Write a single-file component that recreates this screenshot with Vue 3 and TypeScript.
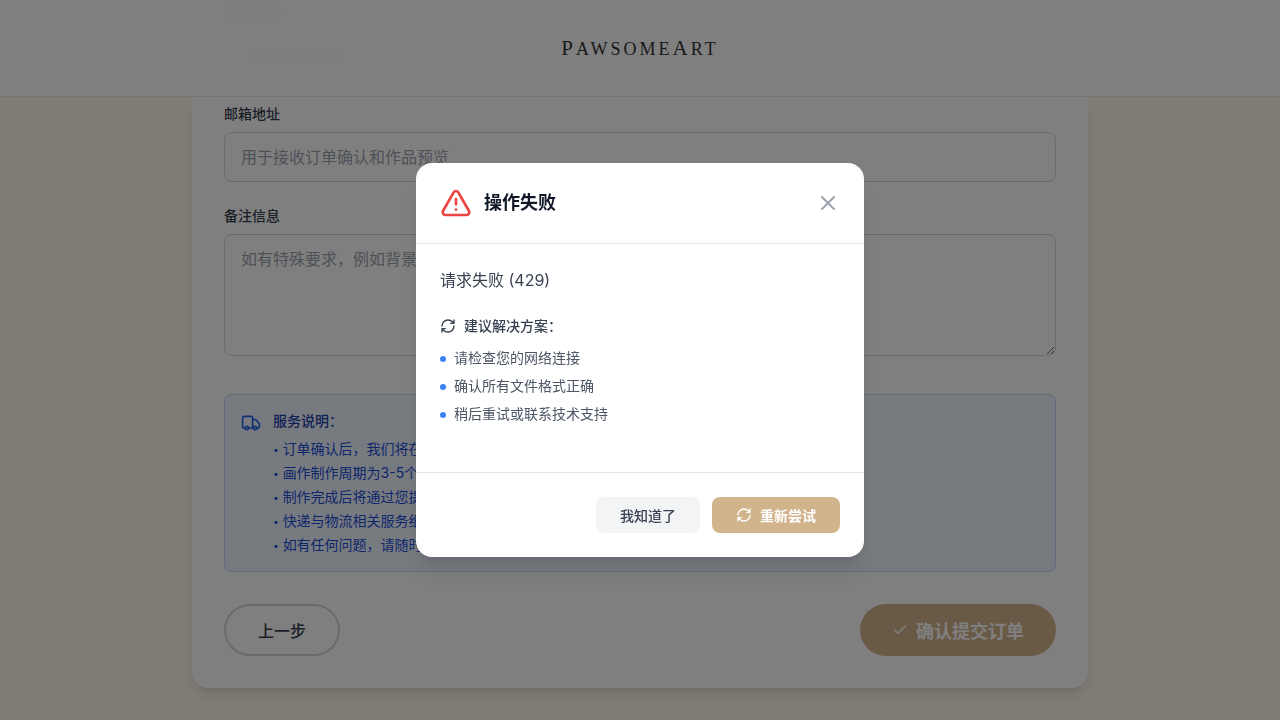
<script setup lang="ts">
import { ref } from 'vue'

const email = ref('')
const remark = ref('')
const open = ref(true)

const notes: string[] = [
  '订单确认后，我们将在24小时内与您联系',
  '画作制作周期为3-5个工作日',
  '制作完成后将通过您提供的邮箱发送预览',
  '快递与物流相关服务细节将另行通知',
  '如有任何问题，请随时联系客服',
]

const suggestions: string[] = ['请检查您的网络连接', '确认所有文件格式正确', '稍后重试或联系技术支持']
</script>

<template>
  <div class="page">
    <header class="topbar">
      <span class="haze haze-label"></span>
      <span class="haze haze-field"></span>
      <a class="brand" href="#"><span class="initial">P</span>awsome<span class="initial">A</span>rt</a>
    </header>

    <main class="card">
      <div class="field">
        <label for="email">邮箱地址</label>
        <input id="email" v-model="email" type="email" placeholder="用于接收订单确认和作品预览" />
      </div>
      <div class="field">
        <label for="remark">备注信息</label>
        <textarea id="remark" v-model="remark" placeholder="如有特殊要求，例如背景颜色、风格等，请在此说明"></textarea>
      </div>

      <section class="notice">
        <svg class="truck" viewBox="0 0 24 24" fill="none" stroke="currentColor" stroke-width="2" stroke-linecap="round" stroke-linejoin="round" aria-hidden="true">
          <path d="M14 18V6a2 2 0 0 0-2-2H4a2 2 0 0 0-2 2v11a1 1 0 0 0 1 1h2" />
          <path d="M15 18H9" />
          <path d="M19 18h2a1 1 0 0 0 1-1v-3.650a1 1 0 0 0-.22-.624l-3.480-4.350A1 1 0 0 0 17.520 8H14" />
          <circle cx="17" cy="18" r="2" />
          <circle cx="7" cy="18" r="2" />
        </svg>
        <div>
          <h3>服务说明：</h3>
          <ul>
            <li v-for="note in notes" :key="note"><span class="bullet">•</span><span>{{ note }}</span></li>
          </ul>
        </div>
      </section>

      <div class="actions">
        <button class="back" type="button">上一步</button>
        <button class="submit" type="button">
          <svg viewBox="0 0 24 24" fill="none" stroke="currentColor" stroke-width="2" stroke-linecap="round" stroke-linejoin="round" aria-hidden="true">
            <path d="M20 6 9 17l-5-5" />
          </svg>
          确认提交订单
        </button>
      </div>
    </main>

    <div v-if="open" class="overlay">
      <div class="dialog" role="dialog" aria-modal="true" aria-labelledby="dialog-title">
        <div class="dialog-head">
          <svg class="alert" viewBox="0 0 24 24" fill="none" stroke="currentColor" stroke-width="2" stroke-linecap="round" stroke-linejoin="round" aria-hidden="true">
            <path d="m21.730 18-8-14a2 2 0 0 0-3.480 0l-8 14A2 2 0 0 0 4 21h16a2 2 0 0 0 1.730-3" />
            <path d="M12 9v4M12 17h.01" />
          </svg>
          <h2 id="dialog-title">操作失败</h2>
          <button class="close" type="button" aria-label="关闭" @click="open = false">
            <svg viewBox="0 0 24 24" fill="none" stroke="currentColor" stroke-width="2" stroke-linecap="round" aria-hidden="true">
              <path d="M18 6 6 18M6 6l12 12" />
            </svg>
          </button>
        </div>
        <div class="dialog-body">
          <p>请求失败 (429)</p>
          <h4>
            <svg viewBox="0 0 24 24" fill="none" stroke="currentColor" stroke-width="2" stroke-linecap="round" stroke-linejoin="round" aria-hidden="true">
              <path d="M3 12a9 9 0 0 1 9-9 9.750 9.750 0 0 1 6.740 2.740L21 8M21 3v5h-5" />
              <path d="M21 12a9 9 0 0 1-9 9 9.750 9.750 0 0 1-6.740-2.740L3 16M8 16H3v5" />
            </svg>
            建议解决方案：
          </h4>
          <ul>
            <li v-for="item in suggestions" :key="item">{{ item }}</li>
          </ul>
        </div>
        <div class="dialog-foot">
          <button class="dismiss" type="button" @click="open = false">我知道了</button>
          <button class="retry" type="button">
            <svg viewBox="0 0 24 24" fill="none" stroke="currentColor" stroke-width="2" stroke-linecap="round" stroke-linejoin="round" aria-hidden="true">
              <path d="M3 12a9 9 0 0 1 9-9 9.750 9.750 0 0 1 6.740 2.740L21 8M21 3v5h-5" />
              <path d="M21 12a9 9 0 0 1-9 9 9.750 9.750 0 0 1-6.740-2.740L3 16M8 16H3v5" />
            </svg>
            重新尝试
          </button>
        </div>
      </div>
    </div>
  </div>
</template>

<style>
body {
  margin: 0;
  background: #fff9eb;
}
</style>

<style scoped>
* {
  box-sizing: border-box;
}
.page {
  min-height: 100vh;
  font-family: Inter, "Noto Sans CJK SC", sans-serif;
  color: #374151;
  background: #fff9eb;
}
h2, h3, h4, p, ul {
  margin: 0;
  padding: 0;
}
ul {
  list-style: none;
}
button, input, textarea {
  font-family: inherit;
}
button {
  border: 0;
  cursor: pointer;
}
svg {
  display: block;
  flex: none;
}
.topbar {
  position: relative;
  display: flex;
  align-items: center;
  justify-content: center;
  height: 97px;
  background: #fff;
  border-bottom: 1px solid #e5e7eb;
}
.haze {
  position: absolute;
  background: #fafafb;
  filter: blur(4px);
}
.haze-label {
  left: 226px;
  top: 6px;
  width: 54px;
  height: 10px;
}
.haze-field {
  left: 248px;
  top: 50px;
  width: 92px;
  height: 10px;
}
.brand {
  font-family: "Liberation Serif", serif;
  font-size: 18px;
  line-height: 28px;
  letter-spacing: 3px;
  text-transform: uppercase;
  text-decoration: none;
  color: #333;
}
.initial {
  font-size: 21px;
}
.card {
  max-width: 896px;
  margin: 0 auto;
  padding: 7px 32px 32px;
  background: #fff;
  border-radius: 0 0 16px 16px;
  box-shadow: 0 10px 15px -3px rgba(0, 0, 0, 0.1), 0 4px 6px -4px rgba(0, 0, 0, 0.1);
}
.field label {
  display: block;
  margin-bottom: 8px;
  font-size: 14px;
  line-height: 20px;
  font-weight: 500;
}
.field input, .field textarea {
  display: block;
  width: 100%;
  padding: 12px 16px;
  border: 1px solid #d1d5db;
  border-radius: 8px;
  background: #fff;
  font-size: 16px;
  line-height: 24px;
}
.field input {
  height: 50px;
  margin-bottom: 24px;
}
.field textarea {
  height: 122px;
  resize: vertical;
}
.field ::placeholder {
  color: #9ca3af;
}
.notice {
  display: flex;
  gap: 12px;
  margin-top: 38px;
  padding: 16px 16px 14px;
  border: 1px solid #bfdbfe;
  border-radius: 8px;
  background: #eff6ff;
  font-size: 14px;
  color: #1d4ed8;
}
.notice h3 {
  margin-bottom: 6px;
  font-size: 14px;
  line-height: 20px;
  font-weight: 500;
  color: #1e40af;
}
.notice li {
  display: flex;
  align-items: center;
  gap: 4px;
  line-height: 24px;
}
.bullet {
  font-size: 10px;
}
.truck {
  width: 20px;
  height: 20px;
  margin-top: 2px;
  color: #2563eb;
}
.actions {
  display: flex;
  justify-content: space-between;
  margin-top: 32px;
}
.actions button {
  height: 52px;
  padding: 0 32px;
  border-radius: 26px;
}
.back {
  border: 2px solid #d1d5db;
  background: #fff;
  font-size: 16px;
  font-weight: 500;
  color: #374151;
}
.submit {
  display: flex;
  align-items: center;
  gap: 8px;
  background: #d2b48c;
  font-size: 18px;
  font-weight: 600;
  color: #fff;
}
.submit svg {
  width: 16px;
  height: 16px;
}
.overlay {
  position: fixed;
  inset: 0;
  display: flex;
  align-items: center;
  justify-content: center;
  background: rgba(0, 0, 0, 0.5);
}
.dialog {
  width: 448px;
  max-width: 100%;
  border-radius: 16px;
  background: #fff;
  box-shadow: 0 20px 25px -5px rgba(0, 0, 0, 0.1), 0 8px 10px -6px rgba(0, 0, 0, 0.1);
}
.dialog-head {
  display: flex;
  align-items: center;
  gap: 12px;
  padding: 24px;
  border-bottom: 1px solid #e5e7eb;
}
.alert {
  width: 32px;
  height: 32px;
  color: #ef4444;
}
.dialog-head h2 {
  flex: 1;
  font-size: 18px;
  line-height: 28px;
  font-weight: 600;
  color: #111827;
}
.close {
  padding: 0;
  background: none;
  color: #9ca3af;
}
.close svg {
  width: 24px;
  height: 24px;
}
.dialog-body {
  padding: 24px 24px 48px;
  color: #374151;
}
.dialog-body p {
  margin-bottom: 24px;
  font-size: 16px;
  line-height: 24px;
}
.dialog-body h4 {
  display: flex;
  align-items: center;
  gap: 8px;
  margin-bottom: 12px;
  font-size: 14px;
  line-height: 20px;
  font-weight: 500;
}
.dialog-body h4 svg, .retry svg {
  width: 16px;
  height: 16px;
}
.dialog-body ul {
  display: grid;
  gap: 8px;
}
.dialog-body li {
  display: flex;
  align-items: flex-start;
  gap: 8px;
  font-size: 14px;
  line-height: 20px;
  color: #4b5563;
}
.dialog-body li::before {
  content: "";
  width: 6px;
  height: 6px;
  margin-top: 8px;
  border-radius: 50%;
  background: #3b82f6;
}
.dialog-foot {
  display: flex;
  justify-content: flex-end;
  gap: 12px;
  padding: 24px;
  border-top: 1px solid #e5e7eb;
}
.dialog-foot button {
  display: flex;
  align-items: center;
  gap: 8px;
  height: 36px;
  padding: 0 24px;
  border-radius: 8px;
  font-size: 14px;
  font-weight: 500;
}
.dismiss {
  background: #f3f4f6;
  color: #374151;
}
.dialog-foot .retry {
  background: #d2b48c;
  font-weight: 600;
  color: #fff;
}
</style>
